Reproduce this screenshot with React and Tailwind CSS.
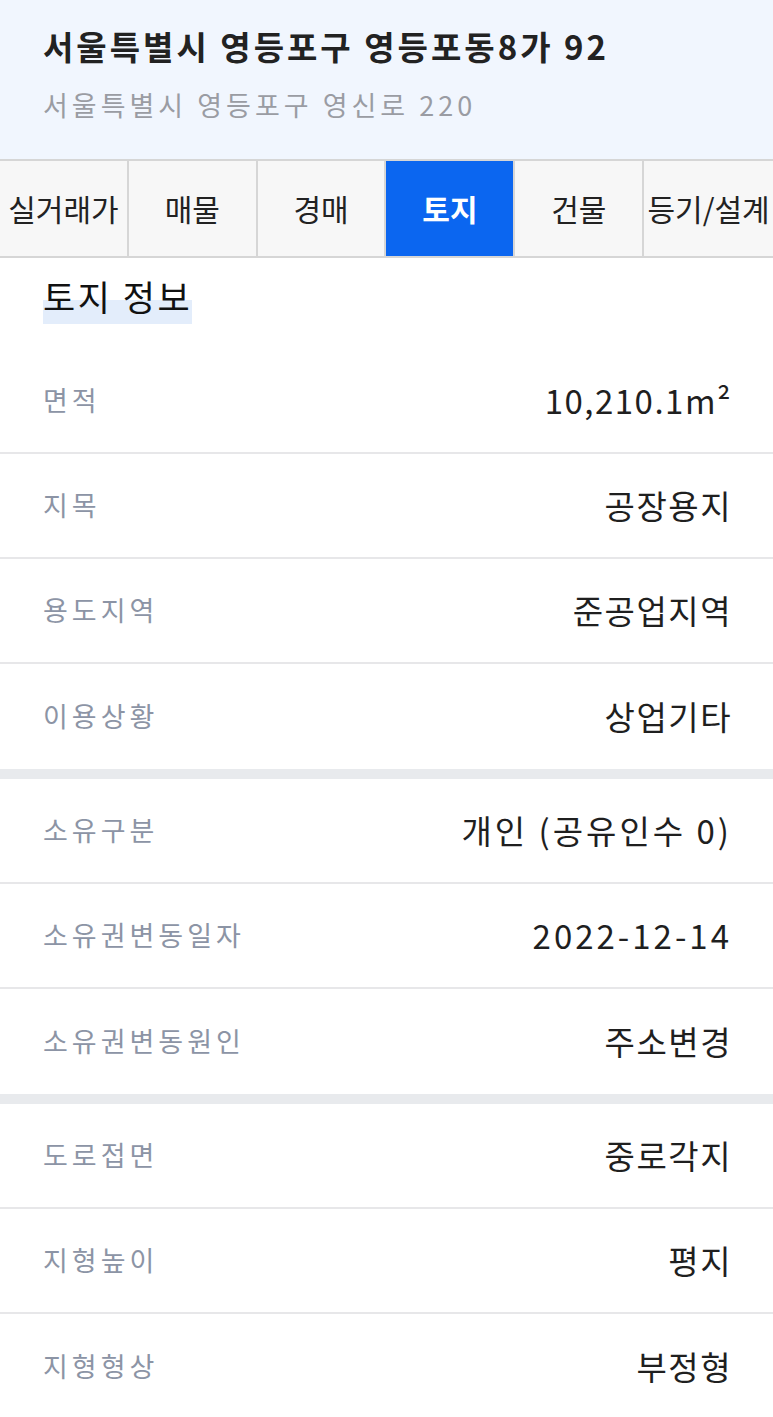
import React from "react";

const tabs = ["실거래가", "매물", "경매", "토지", "건물", "등기/설계"];

// 세 묶음, 사이에 회색 띠
const groups = [
  [
    ["면적", "10,210.1m²"],
    ["지목", "공장용지"],
    ["용도지역", "준공업지역"],
    ["이용상황", "상업기타"],
  ],
  [
    ["소유구분", "개인 (공유인수 0)", true],
    ["소유권변동일자", "2022-12-14", true],
    ["소유권변동원인", "주소변경"],
  ],
  [
    ["도로접면", "중로각지"],
    ["지형높이", "평지"],
    ["지형형상", "부정형"],
  ],
];

const Row = ({ label, value, wide, last }) => (
  <div
    className={`flex items-center justify-between pl-[43px] pr-[41px] h-[105px] ${
      last ? "" : "border-b-2 border-[#e7e7e9]"
    }`}
  >
    <span className="text-[27px] tracking-[4px] text-[#8c94a5]">{label}</span>
    <span
      className={`text-[33px] text-[#1f1f1f] ${
        wide ? "tracking-[3px]" : "tracking-[1.5px]"
      }`}
    >
      {value}
    </span>
  </div>
);

const App = () => {
  return (
    <div
      className="w-[773px] min-h-[1417px] bg-white overflow-hidden"
      style={{ fontFamily: '"Noto Sans CJK KR", "Noto Sans", sans-serif' }}
    >
      <div className="bg-[#f1f6fe] h-[159px] px-[43px] pt-[24px]">
        <h1 className="text-[33px] font-bold text-[#222] leading-[44px] tracking-[3px] whitespace-nowrap">
          서울특별시 영등포구 영등포동8가 92
        </h1>
        <p className="text-[27px] text-[#9a9ca3] leading-[40px] mt-[17px] tracking-[4px]">
          서울특별시 영등포구 영신로 220
        </p>
      </div>

      <div className="grid grid-cols-6 h-[99px] border-y-2 border-[#d6d6d6]">
        {tabs.map((t, i) => (
          <div
            key={t}
            className={`flex items-center justify-center text-[30px] whitespace-nowrap ${
              i < tabs.length - 1 ? "border-r-2 border-[#d6d6d6]" : ""
            } ${
              i === 3
                ? "bg-[#0b66f0] text-white font-bold"
                : "bg-[#f7f7f7] text-[#222]"
            }`}
          >
            {t}
          </div>
        ))}
      </div>

      <div className="h-[91px] px-[43px] pt-[14px]">
        <span className="relative inline-block text-[35px] text-[#111] leading-[48px] tracking-[2.5px]">
          <span className="absolute left-0 right-0 bottom-[-4px] h-[24px] bg-[#e3edfb]" />
          <span className="relative">토지 정보</span>
        </span>
      </div>

      {groups.map((g, gi) => (
        <div key={gi}>
          {gi > 0 && <div className="h-[10px] bg-[#e8eaed]" />}
          {g.map(([l, v, wide], ri) => (
            <Row key={l} label={l} value={v} wide={wide} last={ri === g.length - 1} />
          ))}
        </div>
      ))}
    </div>
  );
};

export default App;
